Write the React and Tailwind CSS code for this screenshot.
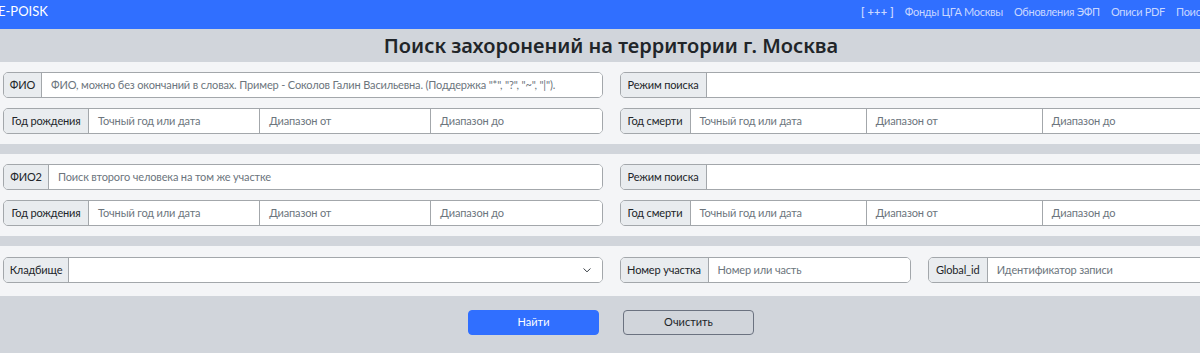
import React from "react";

const font = { fontFamily: 'Lato, "Noto Sans", sans-serif' };

function Label({ children, w }) {
  return (
    <div className={`flex items-center justify-center bg-[#e9ecef] text-[#212529] border-r border-[#a3a7ab] shrink-0 whitespace-nowrap ${w}`}>
      {children}
    </div>
  );
}

function Field({ placeholder, last }) {
  return (
    <div className={`flex-1 min-w-0 flex items-center bg-white pl-[9px] text-[#6c757d] whitespace-nowrap overflow-hidden ${last ? "" : "border-r border-[#a3a7ab]"}`}>
      {placeholder}
    </div>
  );
}

function Group({ children, className = "" }) {
  return (
    <div className={`flex h-[26px] rounded-[5px] border border-[#a3a7ab] overflow-hidden text-[11px] tracking-[-0.15px] ${className}`}>
      {children}
    </div>
  );
}

function Block({ fio, fioLabel, fioW }) {
  return (
    <div className="bg-[#f4f5f7] px-[3px] py-[10px]">
      <div className="grid grid-cols-2 gap-x-[17px] gap-y-[10px]">
        <Group>
          <Label w={fioW}>{fioLabel}</Label>
          <Field placeholder={fio} last />
        </Group>
        <Group>
          <Label w="w-[86px]">Режим поиска</Label>
          <div className="flex-1 bg-white" />
        </Group>
        <Group>
          <Label w="w-[85px]">Год рождения</Label>
          <Field placeholder="Точный год или дата" />
          <Field placeholder="Диапазон от" />
          <Field placeholder="Диапазон до" last />
        </Group>
        <Group>
          <Label w="w-[70px]">Год смерти</Label>
          <Field placeholder="Точный год или дата" />
          <Field placeholder="Диапазон от" />
          <Field placeholder="Диапазон до" last />
        </Group>
      </div>
    </div>
  );
}

export default function App() {
  return (
    <div className="w-[1200px] h-[353px] overflow-hidden bg-[#d1d5db]" style={font}>
      <div className="w-[1222px]">
        <nav className="h-[29px] bg-[#306fff] flex items-center pb-[5px]">
          <span className="w-[863px] shrink-0 text-white text-[13px] -ml-[2px]">E-POISK</span>
          <div className="flex items-center gap-[11px] text-[11px] tracking-[-0.3px] text-[#c9d7ff] whitespace-nowrap">
            <span className="font-bold tracking-[0.2px] whitespace-pre">[ +++ ]</span>
            <span>Фонды ЦГА Москвы</span>
            <span>Обновления ЭФП</span>
            <span>Описи PDF</span>
            <span>Поиск захоронений</span>
          </div>
        </nav>
        <div className="h-[33px] flex items-center justify-center">
          <h1 className="text-[20px] font-semibold text-[#212529] leading-none" style={{ fontFamily: '"Noto Sans", sans-serif' }}>
            Поиск захоронений на территории г. Москва
          </h1>
        </div>
        <Block
          fioLabel="ФИО"
          fioW="w-[38px]"
          fio={'ФИО, можно без окончаний в словах. Пример - Соколов Галин Васильевна. (Поддержка "*", "?", "~", "|").'}
        />
        <div className="h-[10px]" />
        <Block fioLabel="ФИО2" fioW="w-[45px]" fio="Поиск второго человека на том же участке" />
        <div className="h-[10px]" />
        <div className="bg-[#f4f5f7] px-[3px] pt-[11px] pb-[13px]">
          <div className="grid grid-cols-2 gap-x-[17px]">
            <Group>
              <Label w="w-[65px]">Кладбище</Label>
              <div className="flex-1 bg-white flex items-center justify-end pr-[10px]">
                <svg width="10" height="10" viewBox="0 0 16 16" fill="none" stroke="#343a40" strokeWidth="1.6" strokeLinecap="round" strokeLinejoin="round">
                  <path d="M3 6l5 5 5-5" />
                </svg>
              </div>
            </Group>
            <div className="grid grid-cols-2 gap-x-[17px]">
              <Group>
                <Label w="w-[88px]">Номер участка</Label>
                <Field placeholder="Номер или часть" last />
              </Group>
              <Group>
                <Label w="w-[59px]">Global_id</Label>
                <Field placeholder="Идентификатор записи" last />
              </Group>
            </div>
          </div>
        </div>
        <div className="flex justify-center gap-[24px] pt-[14px]">
          <button className="w-[131px] h-[25px] rounded-[4px] bg-[#306fff] text-white text-[11px] border border-[#306fff]">
            Найти
          </button>
          <button className="w-[131px] h-[25px] rounded-[4px] bg-[#d1d5db] text-[#212529] text-[11px] border border-[#6b7280]">
            Очистить
          </button>
        </div>
      </div>
    </div>
  );
}
